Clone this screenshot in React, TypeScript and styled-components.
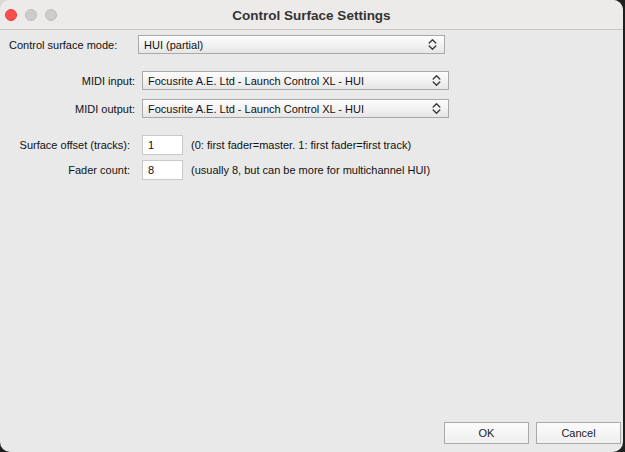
import styled, { createGlobalStyle } from "styled-components";

const GlobalStyle = createGlobalStyle`
  html, body {
    margin: 0;
    padding: 0;
    width: 625px;
    height: 452px;
    overflow: hidden;
    background: linear-gradient(#d9d9d9, #d9d9d9) top left / 60% 12px no-repeat, #1f1f1f;
    font-family: "Liberation Sans", Arial, sans-serif;
  }
`;

type LightProps = { $color: string; $border: string };

const Chevrons = () => (
  <svg width="9" height="13" viewBox="0 0 9 13" fill="none">
    <path d="M1.2 5 L4.5 1.7 L7.8 5" stroke="#3a3a3a" strokeWidth="1.4" strokeLinecap="round" strokeLinejoin="round" />
    <path d="M1.2 8 L4.5 11.3 L7.8 8" stroke="#3a3a3a" strokeWidth="1.4" strokeLinecap="round" strokeLinejoin="round" />
  </svg>
);

const App = () => {
  return (
    <>
      <GlobalStyle />
      <Window>
        <TitleBar>
          <Lights>
            <Light $color="#fe4f4b" $border="#e0403c" />
            <Light $color="#cdcccb" $border="#bdbcbb" />
            <Light $color="#cdcccb" $border="#bdbcbb" />
          </Lights>
          <Title>Control Surface Settings</Title>
          <div />
        </TitleBar>
        <Content>
          <ModeRow>
            <Label>Control surface mode:</Label>
            <SelectBox $width={307}>
              <span>HUI (partial)</span>
              <Chevrons />
            </SelectBox>
          </ModeRow>

          <FieldGrid $top={17} $rowGap={9}>
            <FieldLabel>MIDI input:</FieldLabel>
            <SelectBox $width={307}>
              <span>Focusrite A.E. Ltd - Launch Control XL - HUI</span>
              <Chevrons />
            </SelectBox>
            <span />
            <FieldLabel>MIDI output:</FieldLabel>
            <SelectBox $width={307}>
              <span>Focusrite A.E. Ltd - Launch Control XL - HUI</span>
              <Chevrons />
            </SelectBox>
            <span />
          </FieldGrid>

          <FieldGrid $top={17} $rowGap={5}>
            <FieldLabel $inset>Surface offset (tracks):</FieldLabel>
            <NumberBox>1</NumberBox>
            <Hint>(0: first fader=master. 1: first fader=first track)</Hint>
            <FieldLabel $inset>Fader count:</FieldLabel>
            <NumberBox>8</NumberBox>
            <Hint>(usually 8, but can be more for multichannel HUI)</Hint>
          </FieldGrid>
        </Content>
        <Footer>
          <Button>OK</Button>
          <Button>Cancel</Button>
        </Footer>
      </Window>
    </>
  );
};

export default App;

const Window = styled.div`
  width: 623px;
  height: 452px;
  display: flex;
  flex-direction: column;
  background: #e9e9e9;
  border-radius: 10px;
  overflow: hidden;
  color: #111;
  font-size: 11px;
`;

const TitleBar = styled.div`
  height: 29px;
  flex: none;
  display: grid;
  grid-template-columns: 1fr auto 1fr;
  align-items: center;
  background: #ecebea;
  border-bottom: 1px solid #c6c6c6;
`;

const Lights = styled.div`
  display: flex;
  gap: 8px;
  padding-left: 5px;
  padding-top: 1px;
`;

const Light = styled.span<LightProps>`
  width: 12px;
  height: 12px;
  box-sizing: border-box;
  border-radius: 50%;
  background: ${(p) => p.$color};
  border: 0.5px solid ${(p) => p.$border};
`;

const Title = styled.div`
  font-weight: bold;
  font-size: 13.5px;
  color: #333;
  padding-top: 1px;
`;

const Content = styled.div`
  padding: 5px 0 0 9px;
  display: flex;
  flex-direction: column;
`;

const ModeRow = styled.div`
  display: flex;
  align-items: center;
`;

const Label = styled.span`
  width: 129px;
  white-space: nowrap;
`;

const SelectBox = styled.div<{ $width: number }>`
  width: ${(p) => p.$width}px;
  height: 19px;
  box-sizing: border-box;
  display: flex;
  align-items: center;
  justify-content: space-between;
  padding: 0 7px 0 5px;
  background: linear-gradient(to bottom, #fdfdfd 0%, #f1f1f1 55%, #e6e6e6 100%);
  border: 1px solid #a9a9a9;
  white-space: nowrap;
`;

const FieldGrid = styled.div<{ $top: number; $rowGap: number }>`
  margin-top: ${(p) => p.$top}px;
  display: grid;
  grid-template-columns: 126px auto 1fr;
  column-gap: 7px;
  row-gap: ${(p) => p.$rowGap}px;
  align-items: center;
`;

const FieldLabel = styled.span<{ $inset?: boolean }>`
  text-align: right;
  white-space: nowrap;
  padding-right: ${(p) => (p.$inset ? 5 : 0)}px;
`;

const NumberBox = styled.div`
  width: 41px;
  height: 20px;
  box-sizing: border-box;
  display: flex;
  align-items: center;
  padding-left: 5px;
  background: #fff;
  border: 1px solid #c9c9c9;
`;

const Hint = styled.span`
  white-space: nowrap;
  padding-left: 1px;
`;

const Footer = styled.div`
  margin-top: auto;
  display: flex;
  justify-content: flex-end;
  gap: 7px;
  padding: 0 2px 8px 0;
`;

const Button = styled.button`
  width: 85px;
  height: 22px;
  box-sizing: border-box;
  font-family: "Liberation Sans", Arial, sans-serif;
  font-size: 11px;
  color: #222;
  background: linear-gradient(to bottom, #fbfbfb 0%, #efefef 100%);
  border: 1px solid #aaaaaa;
  border-radius: 0;
  padding: 0;
`;
